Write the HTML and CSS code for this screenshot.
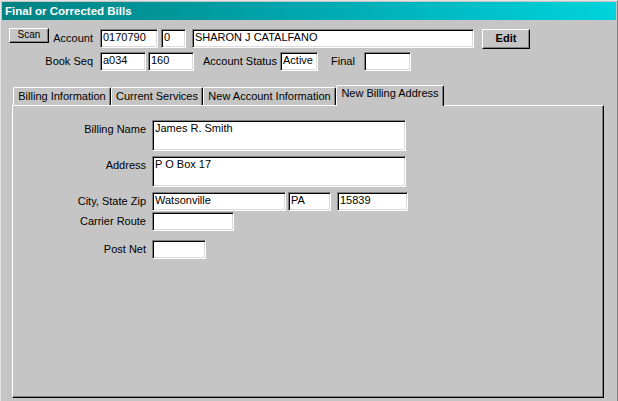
FILE: index.html
```html
<!DOCTYPE html>
<html>
<head>
<meta charset="utf-8">
<link rel="stylesheet" href="styles.css">
</head>
<body>
<div class="window">
  <div class="titlebar">Final or Corrected Bills</div>

  <div class="row row1">
    <div class="lead">
      <div class="btn btn-scan">Scan</div>
      <div class="lbl">Account</div>
    </div>
    <div class="field w-acct">0170790</div>
    <div class="field w-sub">0</div>
    <div class="field w-name">SHARON J CATALFANO</div>
    <div class="btn btn-edit">Edit</div>
  </div>

  <div class="row row2">
    <div class="lead lead-right">
      <div class="lbl">Book Seq</div>
    </div>
    <div class="field w-book">a034</div>
    <div class="field w-seq">160</div>
    <div class="lbl lbl-status">Account Status</div>
    <div class="field w-status">Active</div>
    <div class="lbl lbl-final">Final</div>
    <div class="field w-final"></div>
  </div>

  <div class="tabs">
    <div class="tab t1">Billing Information</div>
    <div class="tab t2">Current Services</div>
    <div class="tab t3">New Account Information</div>
    <div class="tab active t4">New Billing Address</div>
  </div>

  <div class="panel">
    <div class="prow prow-name">
      <div class="plbl">Billing Name</div>
      <div class="field tall w-wide">James R. Smith</div>
    </div>
    <div class="prow prow-addr">
      <div class="plbl">Address</div>
      <div class="field tall w-wide">P O Box 17</div>
    </div>
    <div class="prow prow-city">
      <div class="plbl">City, State Zip</div>
      <div class="field w-city">Watsonville</div>
      <div class="field w-state">PA</div>
      <div class="field w-zip">15839</div>
    </div>
    <div class="prow prow-carrier">
      <div class="plbl">Carrier Route</div>
      <div class="field w-carrier"></div>
    </div>
    <div class="prow prow-post">
      <div class="plbl">Post Net</div>
      <div class="field w-post"></div>
    </div>
  </div>
</div>
</body>
</html>
```

FILE: styles.css
```css
html, body {
  margin: 0;
  padding: 0;
  background: #c5c5c5;
}

body {
  font-family: "Liberation Sans", Arial, sans-serif;
  font-size: 11px;
  color: #000;
}

.window {
  width: 618px;
  height: 401px;
  box-sizing: border-box;
  border-top: 1px solid #e4e4e4;
  border-left: 1px solid #e4e4e4;
  border-right: 1px solid #808080;
  padding: 1px 1px 0 1px;
  background: #c5c5c5;
  overflow: hidden;
}

.titlebar {
  height: 18px;
  line-height: 18px;
  padding-left: 3px;
  color: #fff;
  font-weight: bold;
  font-size: 11.5px;
  background: linear-gradient(90deg, #008282 0%, #00a8b0 50%, #00d3dc 100%);
  margin-bottom: 8px;
}

.row {
  display: flex;
  align-items: flex-start;
}

.row1 {
  height: 20px;
}

.row2 {
  margin-top: 4px;
  height: 20px;
}

.lead {
  width: 84px;
  margin-left: 7px;
  padding-right: 7px;
  display: flex;
  justify-content: space-between;
  align-items: flex-start;
}

.lead-right {
  justify-content: flex-end;
}

.lbl {
  line-height: 18px;
  margin-top: 1px;
  white-space: nowrap;
}

.row2 .lbl {
  margin-top: 0;
}

.field {
  box-sizing: border-box;
  height: 19px;
  background: #fff;
  border-top: 1px solid #808080;
  border-left: 1px solid #808080;
  border-right: 1px solid #fff;
  border-bottom: 1px solid #fff;
  box-shadow: inset 1px 1px 0 #000, inset -1px -1px 0 #dcdcdc;
  padding: 1px 2px 0 2px;
  line-height: 12px;
  white-space: nowrap;
  overflow: hidden;
}

.row1 .field {
  margin-top: 1px;
}

.btn {
  box-sizing: border-box;
  background: #c5c5c5;
  border-top: 1px solid #fff;
  border-left: 1px solid #fff;
  border-right: 1px solid #000;
  border-bottom: 1px solid #000;
  box-shadow: inset -1px -1px 0 #808080;
  text-align: center;
}

.btn-scan {
  width: 40px;
  height: 15px;
  font-size: 10px;
  line-height: 12px;
}

.btn-edit {
  width: 48px;
  height: 20px;
  margin-top: 1px;
  margin-left: 8px;
  font-weight: bold;
  line-height: 17px;
}

.w-acct { width: 58px; }
.w-sub { width: 25px; margin-left: 3px; }
.w-name { width: 282px; margin-left: 6px; }

.w-book { width: 46px; }
.w-seq { width: 46px; margin-left: 2px; }
.lbl-status { margin-left: 9px; }
.w-status { width: 38px; margin-left: 3px; }
.lbl-final { margin-left: 13px; }
.w-final { width: 47px; margin-left: 9px; }

.tabs {
  display: flex;
  align-items: flex-end;
  height: 21px;
  margin-top: 13px;
  margin-left: 11px;
  margin-bottom: -1px;
}

.tab {
  box-sizing: border-box;
  height: 18px;
  margin-bottom: 1px;
  background: #c5c5c5;
  border-top: 1px solid #fff;
  border-left: 1px solid #fff;
  border-right: 1px solid #000;
  border-radius: 2px 2px 0 0;
  box-shadow: inset -1px 0 0 #808080;
  text-align: center;
  line-height: 16px;
  white-space: nowrap;
}

.t1 { width: 98px; }
.t2 { width: 92px; }
.t3 { width: 133px; }

.tab.active {
  width: 108px;
  height: 21px;
  margin-bottom: 0;
  line-height: 13px;
  padding-top: 1px;
  position: relative;
  z-index: 1;
}

.panel {
  box-sizing: border-box;
  width: 592px;
  height: 293px;
  margin-left: 10px;
  border-top: 1px solid #fff;
  border-left: 1px solid #fff;
  border-right: 1px solid #000;
  border-bottom: 1px solid #000;
  box-shadow: inset -1px -1px 0 #808080;
  padding-top: 14px;
}

.prow {
  display: flex;
  align-items: flex-start;
}

.plbl {
  width: 133px;
  margin-right: 6px;
  text-align: right;
  line-height: 19px;
  white-space: nowrap;
}

.field.tall {
  height: 31px;
}

.w-wide { width: 254px; }

.prow-addr { margin-top: 5px; }
.prow-city { margin-top: 5px; }
.prow-carrier { margin-top: 1px; }
.prow-post { margin-top: 9px; }

.w-city { width: 134px; }
.w-state { width: 43px; margin-left: 2px; }
.w-zip { width: 71px; margin-left: 6px; }
.w-carrier { width: 82px; }
.w-post { width: 54px; }
```
